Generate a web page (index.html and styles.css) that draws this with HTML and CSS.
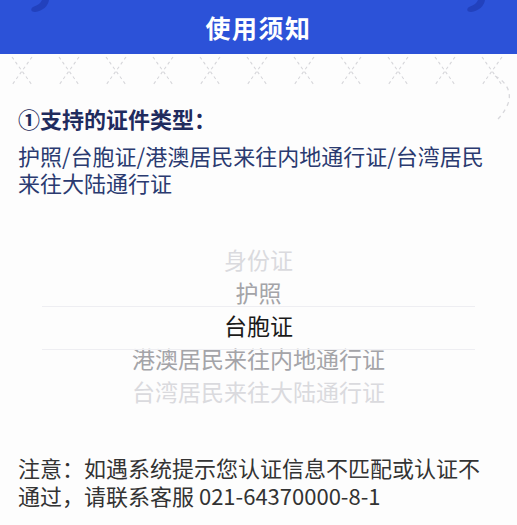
FILE: index.html
```html
<!DOCTYPE html>
<html lang="zh-CN">
<head>
<meta charset="utf-8">
<title>使用须知</title>
<link rel="stylesheet" href="styles.css">
</head>
<body>
<div class="sheet">
  <header class="topbar">
    <svg class="blob blob-left" width="24" height="14" viewBox="0 0 24 14"><path d="M21 0 C20 6 15 11 7 12 C3 12 2 9 5 7 C10 5 13 3 14 0 Z" fill="#2241bd"/></svg>
    <svg class="blob blob-right" width="24" height="14" viewBox="0 0 24 14"><path d="M21 0 C20 6 15 11 7 12 C3 12 2 9 5 7 C10 5 13 3 14 0 Z" fill="#2241bd"/></svg>
    <h1 class="title">使用须知</h1>
  </header>
  <svg class="deco" width="517" height="34" viewBox="0 0 517 34">
    <defs>
      <pattern id="x" x="-1" y="0" width="47" height="34" patternUnits="userSpaceOnUse">
        <g stroke="#d6d6da" stroke-width="1.1" stroke-dasharray="3 3" fill="none">
          <line x1="13" y1="3" x2="33" y2="31"/>
          <line x1="33" y1="3" x2="13" y2="31"/>
        </g>
      </pattern>
    </defs>
    <rect x="0" y="0" width="517" height="34" fill="url(#x)"/>
  </svg>
  <svg class="arc" width="30" height="50" viewBox="0 0 30 50"><path d="M8 2 C20 8 26 20 20 32 C17 38 14 42 10 46" stroke="#d8d8dc" stroke-width="1.3" stroke-dasharray="4 4" fill="none"/></svg>

  <section class="content">
    <h2 class="heading">①支持的证件类型：</h2>
    <p class="types">护照/台胞证/港澳居民来往内地通行证/台湾居民来往大陆通行证</p>

    <div class="picker">
      <div class="band"></div>
      <div class="item far">身份证</div>
      <div class="item near">护照</div>
      <div class="item selected">台胞证</div>
      <div class="item near">港澳居民来往内地通行证</div>
      <div class="item far">台湾居民来往大陆通行证</div>
    </div>

    <p class="notice">注意：如遇系统提示您认证信息不匹配或认证不通过，请联系客服 021-64370000-8-1</p>
  </section>
</div>
</body>
</html>
```

FILE: styles.css
```css
* { box-sizing: border-box; }
html, body {
  margin: 0;
  padding: 0;
  background: #fdfdfd;
}
body {
  font-family: "Noto Sans CJK SC", "Noto Sans", sans-serif;
  width: 517px;
  height: 525px;
  overflow: hidden;
}
.sheet {
  position: relative;
  width: 517px;
  height: 525px;
}
.topbar {
  position: relative;
  height: 54px;
  background: #2c52d8;
  display: flex;
  align-items: center;
  justify-content: center;
}
.blob {
  position: absolute;
  top: 0;
}
.blob-left { left: 28px; }
.blob-right { left: 464px; }
.title {
  margin: 0;
  color: #ffffff;
  font-size: 25px;
  font-weight: 700;
  letter-spacing: 1.5px;
  line-height: 1;
}
.deco {
  display: block;
}
.arc {
  position: absolute;
  right: 0;
  top: 74px;
}
.content {
  padding: 0 18px;
}
.heading {
  margin: 16px 0 0;
  font-size: 22px;
  line-height: 28px;
  font-weight: 700;
  color: #1f2b5e;
}
.types {
  margin: 9.5px 0 0;
  font-size: 22px;
  line-height: 27px;
  color: #2a3a70;
}
.picker {
  position: relative;
  margin: 47px 0 0;
  display: flex;
  flex-direction: column;
  align-items: center;
}
.band {
  position: absolute;
  left: 24px;
  right: 24px;
  top: 63px;
  height: 44px;
  border-top: 1px solid #eeeef2;
  border-bottom: 1px solid #eeeef2;
}
.item {
  height: 33px;
  line-height: 33px;
  font-size: 23px;
  white-space: nowrap;
}
.item.selected { color: #1a1a1a; }
.item.near { color: #a4a4a8; }
.item.far { color: #dadade; }
.notice {
  margin: 45.5px 0 0;
  font-size: 22px;
  line-height: 28px;
  color: #333333;
}
```
